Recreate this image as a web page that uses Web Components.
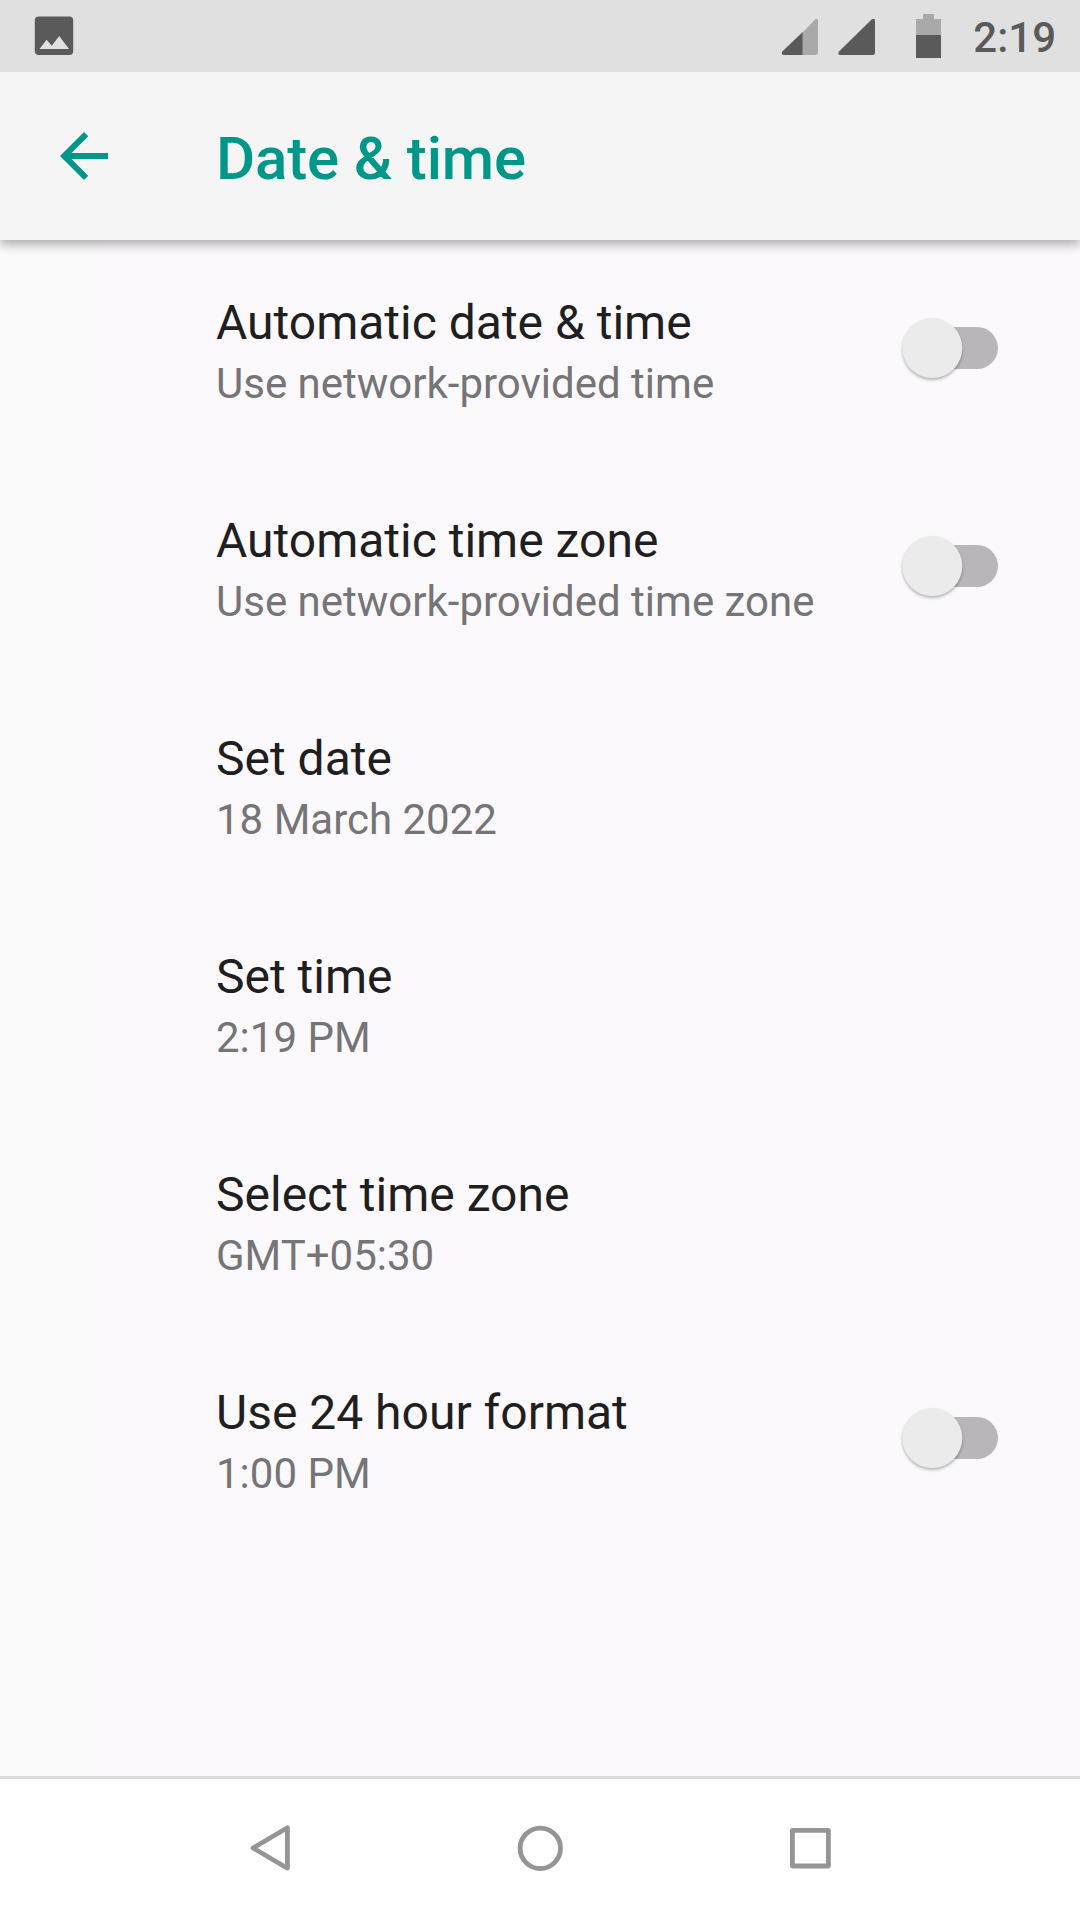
<!DOCTYPE html>
<html lang="en">
<head>
<meta charset="utf-8">
<title>Date &amp; time</title>
<style>
html,body{margin:0;padding:0}
body{width:1080px;height:1920px;overflow:hidden;font-family:Roboto,sans-serif;background:#fbf9fc}
</style>
</head>
<body>
<settings-screen></settings-screen>
<script>
const define = (name, html) => {
  const t = document.createElement('template');
  t.innerHTML = html;
  customElements.define(name, class extends HTMLElement {
    constructor() {
      super();
      this.attachShadow({mode: 'open'}).appendChild(t.content.cloneNode(true));
    }
  });
};

define('status-bar', `
<style>
:host{display:flex;box-sizing:border-box;height:72px;background:#e0e0e0;justify-content:space-between;padding:0 24px 0 33px}
svg{display:block}
.right{display:flex}
.clock{font-size:42px;line-height:48px;font-weight:500;color:#5a5a5a;padding-top:14px;margin-left:29px;white-space:nowrap}
</style>
<svg width="42" height="72" viewBox="33 0 42 72">
  <rect x="34.8" y="16.5" width="38.4" height="38.5" rx="4" fill="#5a5a5a"/>
  <path d="M39.5 49 46.6 39.7 51.8 45.7 59.2 36 69 49Z" fill="#e0e0e0"/>
</svg>
<div class="right">
  <svg width="164" height="72" viewBox="780 0 164 72">
    <path d="M802.7 32.5 815 19.6Q818 17.3 818 21V52.500Q818 55 815.500 55H802.7Z" fill="#a9a9a9"/>
    <path d="M802.7 32 782.3 51.500Q780.5 55 784.500 55H802.7Z" fill="#5a5a5a"/>
    <path d="M871.6 19.500Q875 17.2 875 21V52.500Q875 55 872.500 55H841Q836.8 55 839 51.500Z" fill="#5a5a5a"/>
    <path d="M916 35V19H923V14H934V19H941V35Z" fill="#a9a9a9"/>
    <path d="M916 35H941V58H916Z" fill="#5a5a5a"/>
  </svg>
  <span class="clock"><slot></slot></span>
</div>`);

define('app-bar', `
<style>
:host{display:flex;box-sizing:border-box;height:168px;background:#f5f5f6;align-items:center;padding-left:48px;
  box-shadow:0 4px 11px rgba(0,0,0,.34);z-index:1;clip-path:inset(0 0 -30px 0)}
svg{display:block;margin-right:96px}
h1{margin:5px 0 0;font-size:60px;line-height:70px;font-weight:500;letter-spacing:-.15px;color:#009688;white-space:nowrap}
</style>
<svg width="72" height="72" viewBox="0 0 24 24"><path fill="#009688" d="M20 11H7.83l5.59-5.59L12 4l-8 8 8 8 1.41-1.41L7.83 13H20z"/></svg>
<h1><slot></slot></h1>`);

define('toggle-switch', `
<style>:host{display:block;margin-bottom:2px}svg{display:block;overflow:visible}</style>
<svg width="96" height="60" viewBox="0 0 96 60">
  <rect x="12" y="9" width="84" height="42" rx="21" fill="#b8b6b9"/>
  <circle cx="30.300" cy="30" r="30" fill="#ebebec" style="filter:drop-shadow(0 2.500px 1.800px rgba(0,0,0,.28))"/>
</svg>`);

define('preference-row', `
<style>
:host{display:flex;box-sizing:border-box;height:218px;padding:0 82px 0 216px;justify-content:space-between;align-items:center}
.text{display:flex;flex-direction:column;padding-top:5px}
.title{font-size:48px;line-height:56px;color:#1f1e21;white-space:nowrap}
.summary{font-size:42px;line-height:50px;margin-top:8px;color:#757477;white-space:nowrap}
</style>
<div class="text"><span class="title"><slot name="title"></slot></span><span class="summary"><slot></slot></span></div>
<slot name="widget"></slot>`);

define('navigation-bar', `
<style>
:host{display:flex;box-sizing:border-box;height:144px;background:#fefefe;border-top:3px solid #dbdadd;justify-content:center;gap:198px;align-items:center;padding-bottom:3px}
svg{display:block;fill:none;stroke:#969497;stroke-width:4.8;stroke-linejoin:round}
</style>
<svg width="72" height="72" viewBox="0 0 72 72"><path d="M19 36 53.400 15.800V56.200Z"/></svg>
<svg width="72" height="72" viewBox="0 0 72 72"><circle cx="36.300" cy="36.300" r="20.200"/></svg>
<svg width="72" height="72" viewBox="0 0 72 72"><rect x="18.400" y="18.400" width="36" height="35.600"/></svg>`);

define('settings-screen', `
<style>
:host{display:flex;flex-direction:column;width:1080px;height:1920px;background:linear-gradient(90deg,#fafafa 96px,#fbf9fc 100px)}
main{flex:1}
</style>
<status-bar>2:19</status-bar>
<app-bar>Date &amp; time</app-bar>
<main>
  <preference-row><span slot="title">Automatic date &amp; time</span>Use network-provided time<toggle-switch slot="widget"></toggle-switch></preference-row>
  <preference-row><span slot="title">Automatic time zone</span>Use network-provided time zone<toggle-switch slot="widget"></toggle-switch></preference-row>
  <preference-row><span slot="title">Set date</span>18 March 2022</preference-row>
  <preference-row><span slot="title">Set time</span>2:19 PM</preference-row>
  <preference-row><span slot="title">Select time zone</span>GMT+05:30</preference-row>
  <preference-row><span slot="title">Use 24 hour format</span>1:00 PM<toggle-switch slot="widget"></toggle-switch></preference-row>
</main>
<navigation-bar></navigation-bar>`);
</script>
</body>
</html>
